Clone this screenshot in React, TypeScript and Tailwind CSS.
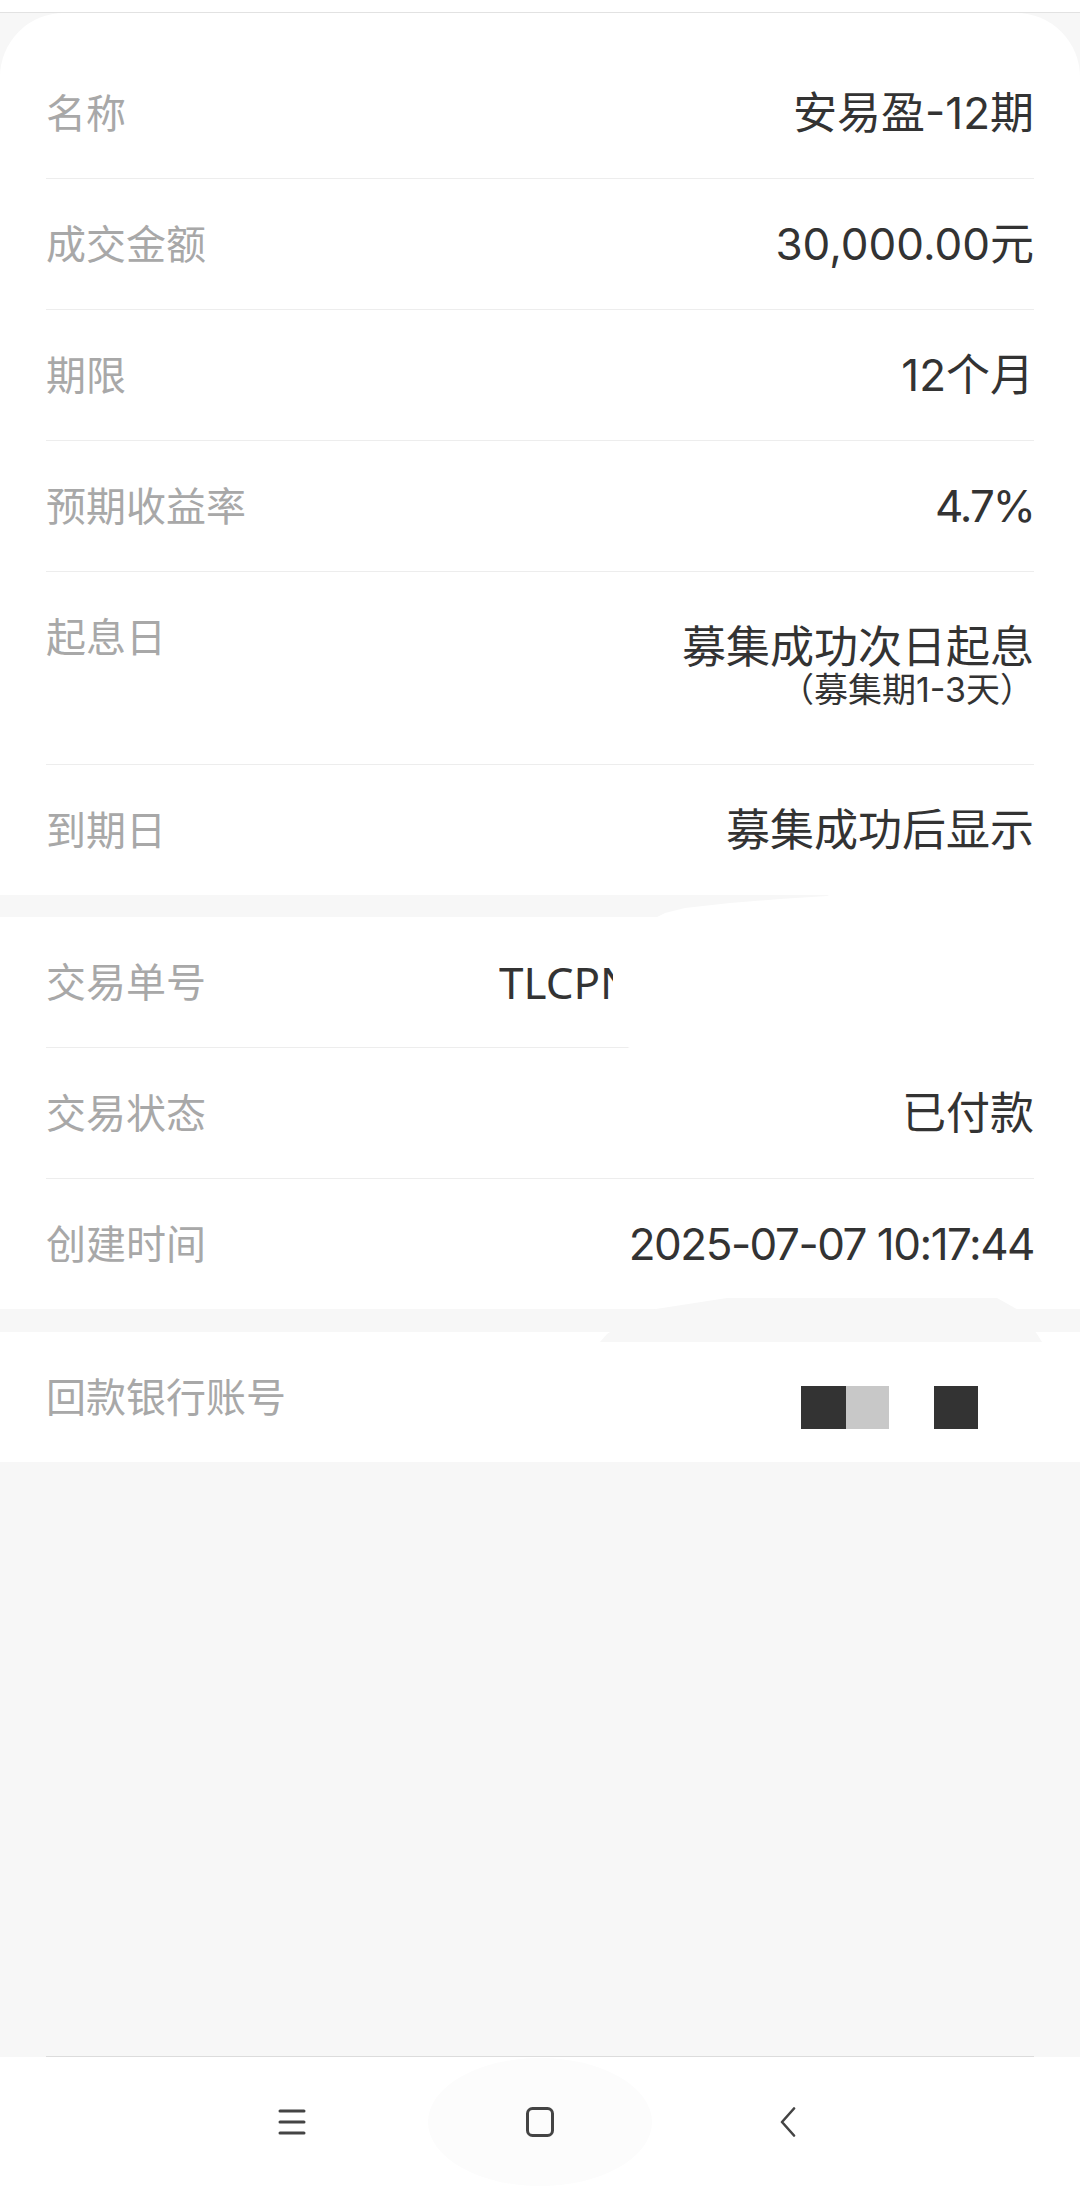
import type { ReactNode } from "react";

const FONT = { fontFamily: '"Noto Sans", "Noto Sans CJK SC", sans-serif' };
const VALUE_FONT = { fontFamily: 'Inter, "Noto Sans CJK SC", sans-serif' };

function Row({
  label,
  children,
  last,
  tight,
}: {
  label: string;
  children: ReactNode;
  last?: boolean;
  tight?: string;
}) {
  return (
    <div
      className={`mx-[46px] flex items-center justify-between py-[41px] ${
        last ? "" : "border-b border-[#ededed]"
      }`}
    >
      <span className="text-[40px] leading-[48px] text-[#a8a8a8] whitespace-nowrap">
        {label}
      </span>
      <span
        className={`text-[44px] leading-[48px] text-[#333] whitespace-nowrap ${tight ?? ""}`}
        style={VALUE_FONT}
      >
        {children}
      </span>
    </div>
  );
}

export default function App() {
  return (
    <div
      className="relative h-[2186px] w-[1080px] overflow-hidden bg-[#f7f7f7] flex flex-col"
      style={FONT}
    >
      {/* top strip */}
      <div className="h-[12px] bg-white" />
      <div className="h-px bg-[#e2e2e2]" />

      {/* ================= PRODUCT CARD ================= */}
      <section className="bg-white rounded-t-[64px] pt-[35px]">
        <Row label="名称">安易盈-12期</Row>
        <Row label="成交金额">30,000.00元</Row>
        <Row label="期限">12个月</Row>
        <Row label="预期收益率" tight="tracking-[-2px]">
          4.7%
        </Row>

        <div className="mx-[46px] flex items-start justify-between pt-[41px] pb-[63px] border-b border-[#ededed]">
          <span className="text-[40px] leading-[48px] text-[#a8a8a8]">起息日</span>
          <div className="flex flex-col items-end text-[#333] mt-[2px]" style={VALUE_FONT}>
            <span className="text-[44px] leading-[64px]">募集成功次日起息</span>
            <span className="text-[34px] leading-[22px]">（募集期1-3天）</span>
          </div>
        </div>

        <Row label="到期日" last>
          募集成功后显示
        </Row>
      </section>

      {/* ================= TRADE CARD ================= */}
      <section className="bg-white mt-[22px]">
        <div className="mx-[46px] flex items-center py-[41px] border-b border-[#ededed]">
          <span className="w-[453px] text-[40px] leading-[48px] text-[#a8a8a8] whitespace-nowrap">
            交易单号
          </span>
          <span className="w-[114px] overflow-hidden text-[44px] leading-[48px] text-[#333] whitespace-nowrap">
            TLCPN2025
          </span>
        </div>
        <Row label="交易状态">已付款</Row>
        <Row label="创建时间" last tight="tracking-[-1.5px]">
          2025-07-07 10:17:44
        </Row>
      </section>

      {/* ================= BANK CARD ================= */}
      <section className="bg-white mt-[23px]">
        <div className="mx-[46px] flex items-center justify-between py-[41px]">
          <span className="text-[40px] leading-[48px] text-[#a8a8a8]">回款银行账号</span>
          <div className="flex translate-y-[10px] mr-[56px]">
            <div className="w-[45px] h-[43px] bg-[#333]" />
            <div className="w-[43px] h-[43px] bg-[#c8c8c8]" />
            <div className="w-[45px] h-[43px] bg-white" />
            <div className="w-[44px] h-[43px] bg-[#333]" />
          </div>
        </div>
      </section>

      <div className="flex-1" />

      {/* ================= NAV BAR ================= */}
      <div className="mx-[46px] h-px bg-[#dcdcdc]" />
      <nav className="h-[129px] bg-white flex items-center justify-center gap-[24px]">
        <div className="w-[224px] h-[128px] flex items-center justify-center">
          <IconMenu />
        </div>
        <div className="w-[224px] h-[128px] rounded-[50%] bg-[#fcfcfc] flex items-center justify-center">
          <IconHome />
        </div>
        <div className="w-[224px] h-[128px] flex items-center justify-center">
          <IconBack />
        </div>
      </nav>

      {/* erased patches over the screenshot */}
      <div className="absolute left-[600px] top-[890px] w-[480px] h-[165px] bg-white [clip-path:polygon(13px_35px,53px_29px,65px_23px,85px_18px,130px_13px,180px_9px,227px_6px,240px_0px,480px_0px,480px_162px,38px_162px,13px_150px)]" />
      <div className="absolute left-[600px] top-[1298px] w-[442px] h-[44px] bg-[#f7f7f7] [clip-path:polygon(43px_13px,127px_0px,397px_0px,420px_13px,437px_36px,442px_44px,0px_44px,7px_36px)]" />
    </div>
  );
}

/* ================= ICONS ================= */

function IconMenu() {
  return (
    <svg width="28" height="26" viewBox="0 0 28 26" fill="none" aria-hidden="true">
      <path
        d="M2 2h24M2 13h24M2 24h24"
        stroke="#444"
        strokeWidth="3"
        strokeLinecap="round"
      />
    </svg>
  );
}

function IconHome() {
  return (
    <svg width="28" height="30" viewBox="0 0 28 30" fill="none" aria-hidden="true">
      <rect x="1.5" y="1.5" width="25" height="27" rx="5" stroke="#444" strokeWidth="3" />
    </svg>
  );
}

function IconBack() {
  return (
    <svg width="18" height="30" viewBox="0 0 18 30" fill="none" aria-hidden="true">
      <path
        d="M15 1.5 3 15l12 13.5"
        stroke="#444"
        strokeWidth="2.6"
        strokeLinecap="round"
        strokeLinejoin="round"
      />
    </svg>
  );
}
